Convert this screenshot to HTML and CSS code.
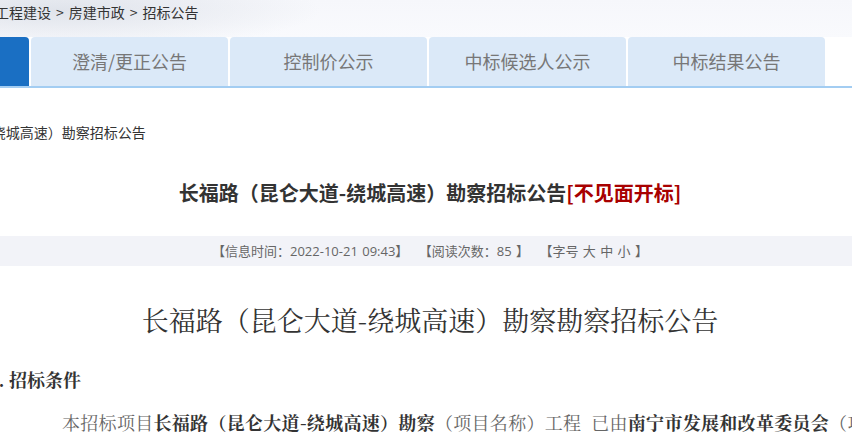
FILE: index.html
```html
<!DOCTYPE html>
<html lang="zh-CN">
<head>
    <meta charset="UTF-8">
    <meta name="viewport" content="width=device-width, initial-scale=1.0">
    <title>长福路（昆仑大道-绕城高速）勘察招标公告</title>
    <link rel="stylesheet" href="styles.css">
</head>
<body>
    <div class="wrap">
        <!-- 顶部：面包屑 + 栏目切换 -->
        <div class="top">
            <div class="crumb">工程建设<span class="sep">&gt;</span>房建市政<span class="sep">&gt;</span>招标公告</div>
        </div>
        <div class="tabs">
            <a class="tab active">招标公告</a>
            <a class="tab">澄清/更正公告</a>
            <a class="tab">控制价公示</a>
            <a class="tab">中标候选人公示</a>
            <a class="tab">中标结果公告</a>
        </div>

        <div class="pos">长福路（昆仑大道-绕城高速）勘察招标公告</div>

        <h2 class="title">长福路（昆仑大道-绕城高速）勘察招标公告<span class="red">[不见面开标]</span></h2>

        <div class="info">
            <span>【信息时间：2022-10-21 09:43】</span>
            <span>【阅读次数：85 】</span>
            <span>【字号 <a>大</a> <a>中</a> <a>小</a> 】</span>
        </div>

        <!-- 正文 -->
        <div class="article">
            <h1>长福路（昆仑大道-绕城高速）勘察勘察招标公告</h1>
            <h3>1. 招标条件</h3>
            <p>本招标项目<b>长福路（昆仑大道-绕城高速）勘察</b>（项目名称）工程&nbsp; 已由<b>南宁市发展和改革委员会</b>（项目审批、核准或备案机关名称）批准建设，项目业主为南宁市城市建设投资有限公司。</p>
        </div>
    </div>
</body>
</html>
```

FILE: styles.css
```css
html, body {
    margin: 0;
    overflow: hidden;
}
body {
    font-family: "Noto Sans CJK SC", "Liberation Sans", sans-serif;
    color: #333;
    background: #fff;
}
.wrap {
    width: 1200px;
    margin-left: -170px;
}
.top {
    height: 37px;
    background: radial-gradient(ellipse 260px 40px at 230px 10px, rgba(214, 219, 228, 0.7), rgba(214, 219, 228, 0) 100%),
                linear-gradient(#f6f7fb, #f9fafd);
}
.crumb {
    padding: 3px 0 0 165px;
    font-size: 14px;
    line-height: 18px;
    color: #333;
}
.sep {
    margin: 0 5px;
}
.tabs {
    display: flex;
    gap: 2px;
    padding-left: 2px;
    border-bottom: 2px solid #a3cdf2;
}
.tab {
    width: 197px;
    height: 49px;
    line-height: 49px;
    text-align: center;
    font-size: 18px;
    color: #777;
    background: #dbe9f8;
    border-radius: 4px 4px 0 0;
}
.tab.active {
    background: #1a6fc3;
    color: #fff;
}
.pos {
    margin-top: 34px;
    padding-left: 45px;
    font-size: 14px;
    line-height: 20px;
    color: #333;
}
.title {
    margin: 36px 0 0;
    text-align: center;
    font-size: 20px;
    line-height: 30px;
    font-weight: bold;
    color: #333;
}
.red {
    color: #a80000;
}
.info {
    margin-top: 28px;
    height: 30px;
    line-height: 30px;
    background: #f2f3f8;
    text-align: center;
    font-family: "Open Sans", "Noto Sans CJK SC", sans-serif;
    font-size: 13px;
    color: #666;
    word-spacing: 1px;
}
.info span {
    margin: 0 3px;
}
.article {
    padding-left: 160px;
    font-family: "Noto Serif CJK SC", "Source Han Serif SC", "AR PL UMing CN", "Noto Sans CJK SC", serif;
}
.article h1 {
    margin: 34px 0 0;
    padding-right: 160px;
    text-align: center;
    font-size: 27px;
    line-height: 40px;
    font-weight: normal;
    color: #333;
}
.article h3 {
    margin: 25px 0 0;
    font-size: 18px;
    line-height: 28px;
    color: #333;
}
.article p {
    margin: 14px 0 0;
    text-indent: 72px;
    font-size: 18px;
    line-height: 30px;
    letter-spacing: 0.3px;
    color: #666;
    white-space: nowrap;
}
.article b {
    color: #333;
}
```
